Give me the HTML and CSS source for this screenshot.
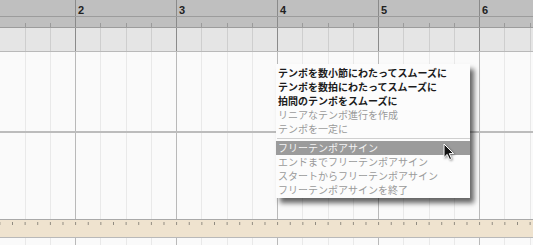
FILE: index.html
```html
<!DOCTYPE html>
<html lang="ja">
<head>
  <meta charset="UTF-8">
  <title>Tempo</title>
  <link rel="stylesheet" href="styles.css">
</head>
<body>

  <div class="arrange">
    <div class="ruler">
      <div class="bar"></div>
      <div class="bar"><span>2</span></div>
      <div class="bar"><span>3</span></div>
      <div class="bar"><span>4</span></div>
      <div class="bar"><span>5</span></div>
      <div class="bar"><span>6</span></div>
    </div>
    <div class="ticks"></div>
    <div class="lane"></div>
    <div class="track"></div>
    <div class="track tall"></div>
    <div class="tempo"></div>
    <div class="track rest"></div>
  </div>

  <ul class="menu">
    <li class="on">テンポを数小節にわたってスムーズに</li>
    <li class="on">テンポを数拍にわたってスムーズに</li>
    <li class="on">拍間のテンポをスムーズに</li>
    <li>リニアなテンポ進行を作成</li>
    <li>テンポを一定に</li>
    <li class="sep"></li>
    <li class="hover">フリーテンポアサイン</li>
    <li>エンドまでフリーテンポアサイン</li>
    <li>スタートからフリーテンポアサイン</li>
    <li>フリーテンポアサインを終了</li>
  </ul>

  <svg class="cursor" width="12" height="18" viewBox="0 0 12 18">
    <path d="M1 1 L1 14.5 L4.2 11.4 L6.6 16.6 L8.6 15.7 L6.3 10.6 L10.6 10.6 Z" fill="#111" stroke="#fff" stroke-width="1"/>
  </svg>

</body>
</html>
```

FILE: styles.css
```css
body {
  margin: 0;
  background: #fafafa;
  font-family: "Noto Sans CJK JP", "Liberation Sans", sans-serif;
  overflow: hidden;
}

.arrange {
  display: flex;
  flex-direction: column;
  height: 245px;
  overflow: hidden;
}

/* bar numbers row */
.ruler {
  display: flex;
  height: 16px;
  margin-left: -26px;
  background: #bfbfbf;
  border-bottom: 1px solid #9c9c9c;
  overflow: hidden;
}

.bar {
  flex: 0 0 101px;
  border-left: 1px solid #8a8a8a;
  font-family: "Liberation Sans", sans-serif;
  font-size: 11px;
  font-weight: bold;
  color: #222;
  padding-left: 2px;
  line-height: 14px;
  padding-top: 3px;
  box-sizing: border-box;
  height: 17px;
}

.ticks {
  height: 10px;
  border-bottom: 1px solid #9c9c9c;
  background-color: #bfbfbf;
  background-image:
    linear-gradient(to right, transparent 0 25px, #9a9a9a 25px 26px, transparent 26px 51px, #9a9a9a 51px 52px, transparent 52px 76px, #9a9a9a 76px 77px, transparent 77px),
    linear-gradient(to right, #8a8a8a 0 1px, transparent 1px);
  background-size: 101px 4px, 101px 100%;
  background-repeat: repeat-x;
  background-position: 75px 6px, 75px 0;
}

.lane {
  height: 23px;
  border-bottom: 1px solid #b9b9b9;
  background-color: #e5e5e5;
  background-image: linear-gradient(to right, #8a8a8a 0 1px, transparent 1px 25px, #cecece 25px 26px, transparent 26px 51px, #cecece 51px 52px, transparent 52px 76px, #cecece 76px 77px, transparent 77px);
  background-size: 101px 100%;
  background-position: 75px 0;
}

.track {
  height: 79px;
  border-bottom: 2px solid #bcbcbc;
  background-image: linear-gradient(to right, #b9b9b9 0 1px, transparent 1px 25px, #e9e9e9 25px 26px, transparent 26px 51px, #e9e9e9 51px 52px, transparent 52px 76px, #e9e9e9 76px 77px, transparent 77px);
  background-size: 101px 100%;
  background-position: 75px 0;
}

.track.tall {
  height: 86px;
  border-bottom: 1px solid #a9a9a9;
}

.track.rest {
  flex: 1;
  border-bottom: none;
}

.tempo {
  height: 17px;
  border-bottom: 1px solid #b9b9b9;
  background-color: #efe3cf;
  background-image: linear-gradient(to right, #8f8a80 0 1px, transparent 1px);
  background-size: 12.625px 3px;
  background-repeat: repeat-x;
  background-position: 12px 2px;
}

/* context menu */
.menu {
  position: absolute;
  left: 276px;
  top: 64px;
  width: 194px;
  margin: 0;
  padding: 2px 0 1px;
  list-style: none;
  background: #fcfcfc;
  box-shadow: 4px 5px 5px rgba(0, 0, 0, 0.6);
  font-size: 10px;
  line-height: 14px;
  color: #9a9a9a;
}

.menu li {
  padding-left: 2px;
  height: 14px;
  white-space: nowrap;
}

.menu li.on {
  color: #1c1c1c;
  font-weight: bold;
}

.menu li.sep {
  height: 1px;
  margin: 2px 0 2px 1px;
  padding: 0;
  background: #cfcfcf;
}

.menu li.hover {
  background: #9b9b9b;
  color: #f4f4f4;
}

.cursor {
  position: absolute;
  left: 443px;
  top: 143px;
  filter: drop-shadow(1px 1px 1px rgba(0, 0, 0, 0.4));
}
```
